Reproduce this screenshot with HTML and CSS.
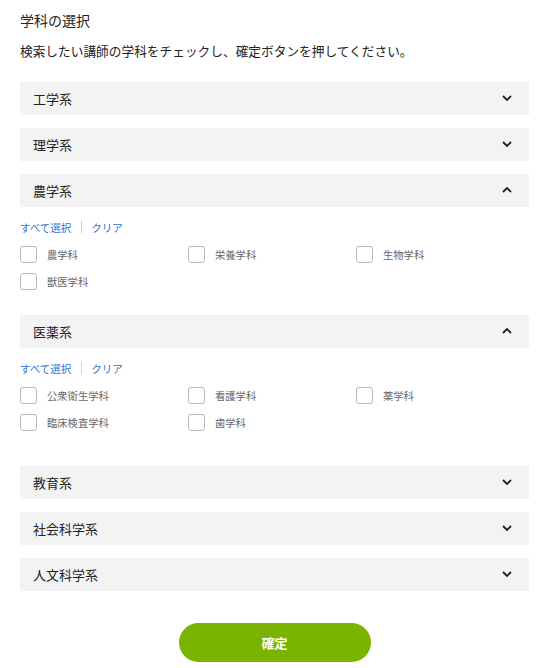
FILE: index.html
```html
<!DOCTYPE html>
<html lang="ja">
<head>
<meta charset="utf-8">
<title>学科の選択</title>
<link rel="stylesheet" href="styles.css">
</head>
<body>
<main class="page">
  <h2 class="title">学科の選択</h2>
  <p class="lead">検索したい講師の学科をチェックし、確定ボタンを押してください。</p>

  <div class="accordion">
    <section class="section">
      <div class="head"><span>工学系</span>
        <svg class="chev" width="10" height="6" viewBox="0 0 10 6"><path d="M1 1L5 5L9 1" fill="none" stroke="#222" stroke-width="1.8"/></svg>
      </div>
    </section>
    <section class="section">
      <div class="head"><span>理学系</span>
        <svg class="chev" width="10" height="6" viewBox="0 0 10 6"><path d="M1 1L5 5L9 1" fill="none" stroke="#222" stroke-width="1.8"/></svg>
      </div>
    </section>
    <section class="section">
      <div class="head"><span>農学系</span>
        <svg class="chev" width="10" height="6" viewBox="0 0 10 6"><path d="M1 5L5 1L9 5" fill="none" stroke="#222" stroke-width="1.8"/></svg>
      </div>
      <div class="panel">
        <div class="links"><a class="link">すべて選択</a><span class="sep"></span><a class="link">クリア</a></div>
        <div class="grid">
          <label class="item"><span class="box"></span>農学科</label>
          <label class="item"><span class="box"></span>栄養学科</label>
          <label class="item"><span class="box"></span>生物学科</label>
          <label class="item"><span class="box"></span>獣医学科</label>
        </div>
      </div>
    </section>
    <section class="section">
      <div class="head"><span>医薬系</span>
        <svg class="chev" width="10" height="6" viewBox="0 0 10 6"><path d="M1 5L5 1L9 5" fill="none" stroke="#222" stroke-width="1.8"/></svg>
      </div>
      <div class="panel panel-wide">
        <div class="links"><a class="link">すべて選択</a><span class="sep"></span><a class="link">クリア</a></div>
        <div class="grid">
          <label class="item"><span class="box"></span>公衆衛生学科</label>
          <label class="item"><span class="box"></span>看護学科</label>
          <label class="item"><span class="box"></span>薬学科</label>
          <label class="item"><span class="box"></span>臨床検査学科</label>
          <label class="item"><span class="box"></span>歯学科</label>
        </div>
      </div>
    </section>
    <section class="section">
      <div class="head"><span>教育系</span>
        <svg class="chev" width="10" height="6" viewBox="0 0 10 6"><path d="M1 1L5 5L9 1" fill="none" stroke="#222" stroke-width="1.8"/></svg>
      </div>
    </section>
    <section class="section">
      <div class="head"><span>社会科学系</span>
        <svg class="chev" width="10" height="6" viewBox="0 0 10 6"><path d="M1 1L5 5L9 1" fill="none" stroke="#222" stroke-width="1.8"/></svg>
      </div>
    </section>
    <section class="section">
      <div class="head"><span>人文科学系</span>
        <svg class="chev" width="10" height="6" viewBox="0 0 10 6"><path d="M1 1L5 5L9 1" fill="none" stroke="#222" stroke-width="1.8"/></svg>
      </div>
    </section>
  </div>

  <div class="actions"><button class="submit" type="button">確定</button></div>
</main>
</body>
</html>
```

FILE: styles.css
```css
* { box-sizing: border-box; }
html, body { margin: 0; padding: 0; background: #fff; }
body {
  font-family: "Noto Sans CJK JP", "Noto Sans", sans-serif;
  color: #222;
}
.page { padding: 10px 7px 0 20px; }
.title {
  margin: 0;
  font-size: 14px;
  line-height: 20px;
  font-weight: 400;
}
.lead {
  margin: 11px 0 0;
  font-size: 12.7px;
  line-height: 20px;
}
.accordion {
  margin-top: 21px;
  display: flex;
  flex-direction: column;
  gap: 13px;
}
.head {
  height: 33px;
  background: #f3f3f3;
  display: flex;
  align-items: center;
  justify-content: space-between;
  padding: 0 17px 1px 13px;
  font-size: 13px;
}
.chev { display: block; }
.panel { padding: 12px 0 12px; }
.panel-wide { padding-bottom: 22px; }
.links {
  display: flex;
  align-items: center;
  height: 16px;
  font-size: 10.5px;
}
.link { color: #2f6fd4; }
.sep {
  width: 1px;
  height: 12px;
  background: #d0d0d0;
  margin: 0 9px 0 10px;
}
.grid {
  margin-top: 11px;
  display: grid;
  grid-template-columns: repeat(3, 168px);
  row-gap: 10px;
}
.item {
  display: flex;
  align-items: center;
  height: 17px;
  font-size: 10.3px;
  color: #666;
}
.box {
  width: 17px;
  height: 17px;
  border: 1px solid #b8b8b8;
  border-radius: 3px;
  margin-right: 10px;
  background: #fff;
}
.actions {
  margin-top: 32px;
  display: flex;
  justify-content: center;
}
.submit {
  width: 192px;
  height: 39px;
  border: 0;
  border-radius: 20px;
  background: #7ab400;
  color: #fff;
  font-family: "Noto Sans CJK JP", sans-serif;
  font-size: 13px;
  font-weight: 700;
}
```
